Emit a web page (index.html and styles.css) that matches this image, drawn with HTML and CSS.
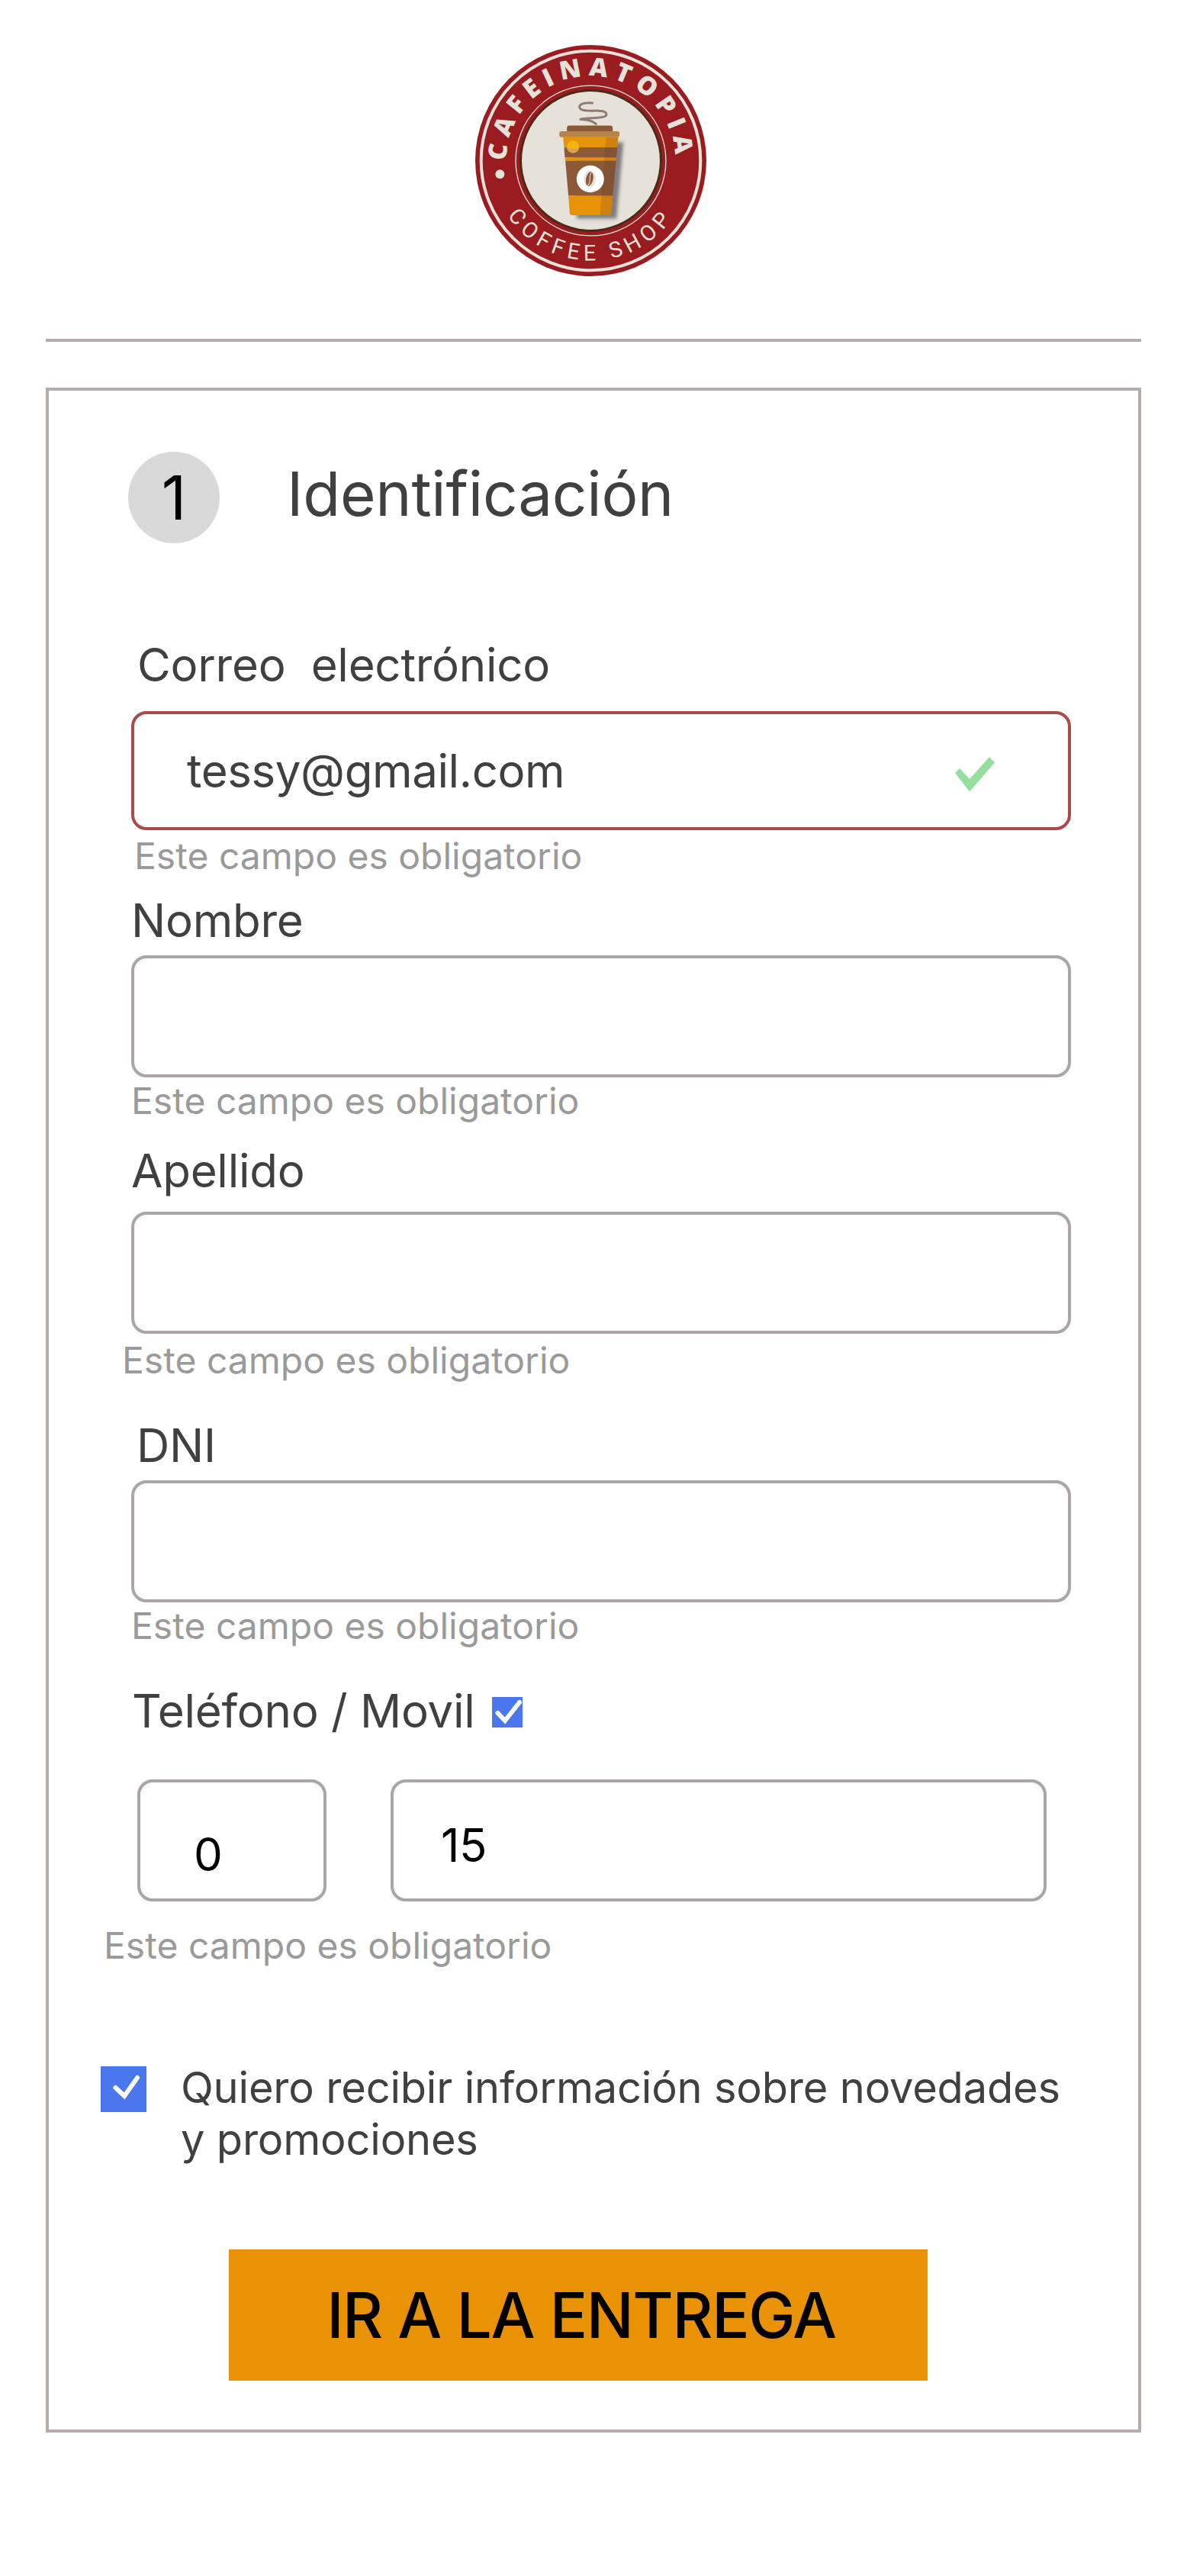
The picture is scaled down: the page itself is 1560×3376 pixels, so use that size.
FILE: index.html
```html
<!DOCTYPE html>
<html lang="es">
<head>
  <meta charset="UTF-8" />
  <title>Cafeinatopia - Identificación</title>
  <link rel="stylesheet" href="styles.css">
</head>
<body>
  <!-- LOGO -->
  <header class="site-header">
    <svg class="logo" viewBox="130 88 908 908" role="img" aria-label="Cafeinatopia Coffee Shop">
      <defs>
        <path id="arcTop" d="M 261.3 620 A 332 332 0 1 1 906.7 620" />
        <path id="arcBottom" d="M 204.4 640 A 392 392 0 0 0 963.6 640" />
        <filter id="cupShadow" x="-20%" y="-20%" width="150%" height="150%">
          <feGaussianBlur stdDeviation="7" />
        </filter>
      </defs>
      <circle cx="584" cy="542" r="454" fill="#9b1c20" />
      <circle cx="584" cy="542" r="431" fill="none" stroke="#e6e2da" stroke-width="12" />
      <circle cx="584" cy="542" r="295" fill="none" stroke="#e6e2da" stroke-width="4" />
      <circle cx="584" cy="542" r="280" fill="#4c2a16" />
      <circle cx="584" cy="542" r="271" fill="#e6e2da" />
      <circle cx="227" cy="595" r="18" fill="#e6e2da" />
      <text class="logo-top"><textPath href="#arcTop" startOffset="50%" text-anchor="middle">CAFEINATOPIA</textPath></text>
      <text class="logo-bottom"><textPath href="#arcBottom" startOffset="50%" text-anchor="middle">COFFEE SHOP</textPath></text>

      <!-- steam -->
      <path d="M590 316 C545 312 530 328 545 340 C565 355 640 335 645 358 C650 378 590 372 540 380 C560 380 590 385 604 398" fill="none" stroke="#8f7b6e" stroke-width="9" stroke-linecap="round" />

      <!-- cup -->
      <path d="M515 470 L712 470 L685 770 L530 770 Z" fill="#5f5a63" opacity="0.75" filter="url(#cupShadow)" />
      <path d="M490 414 Q490 404 500 404 L660 404 Q670 404 670 414 L670 428 L490 428 Z" fill="#8a5a36" />
      <path d="M475 450 L692 450 L688 490 L479 490 Z" fill="#e8920a" />
      <path d="M479 490 L688 490 L684 530 L482 530 Z" fill="#8c5a36" />
      <path d="M482 530 L684 530 L683 543 L484 543 Z" fill="#e8920a" />
      <path d="M484 543 L683 543 L670 680 L496 680 Z" fill="#8c5a36" />
      <path d="M496 680 L670 680 L664 748 Q663 756 655 756 L510 756 Q502 756 501 748 Z" fill="#e8920a" />
      <path d="M644 450 L692 450 L664 748 Q663 756 655 756 L620 756 Z" fill="#5c3a1e" opacity="0.18" />
      <rect x="460" y="427" width="237" height="23" rx="10" fill="#b9814b" />
      <circle cx="514" cy="488" r="24" fill="#f2b60f" />
      <path d="M491 495 A24 24 0 0 0 537 495 Z" fill="#d9a05a" />
      <ellipse cx="582" cy="614" rx="54" ry="53" fill="#ffffff" />
      <ellipse cx="580" cy="614" rx="24" ry="33" fill="#e6e2da" />
      <ellipse cx="579" cy="614" rx="14" ry="28" fill="#8c5a36" transform="rotate(12 579 614)" />
      <path d="M586 590 C572 605 590 620 572 640" fill="none" stroke="#e6e2da" stroke-width="3" />
    </svg>
  </header>

  <hr class="divider" />

  <main class="checkout-card">
    <div class="step-head">
      <span class="step-number">1</span>
      <h1 class="step-title">Identificación</h1>
    </div>

    <form class="step-form">
      <!-- EMAIL -->
      <div class="field field-email">
        <label class="field-label">Correo&nbsp; electrónico</label>
        <div class="input-wrap">
          <input class="text-input is-valid" type="email" value="tessy@gmail.com" />
          <svg class="valid-check" viewBox="0 0 52 46"><path d="M0 21 L6 15 L19 29 L45 0 L52 7.5 L19 45.5 Z" /></svg>
        </div>
        <p class="field-hint">Este campo es obligatorio</p>
      </div>

      <div class="field field-nombre">
        <label class="field-label">Nombre</label>
        <input class="text-input" type="text" />
        <p class="field-hint">Este campo es obligatorio</p>
      </div>

      <div class="field field-apellido">
        <label class="field-label">Apellido</label>
        <input class="text-input" type="text" />
        <p class="field-hint">Este campo es obligatorio</p>
      </div>

      <div class="field field-dni">
        <label class="field-label">DNI</label>
        <input class="text-input" type="text" />
        <p class="field-hint">Este campo es obligatorio</p>
      </div>

      <!-- PHONE -->
      <div class="field field-phone">
        <div class="phone-label">
          <label class="field-label">Teléfono / Movil</label>
          <span class="check-box check-small">
            <svg viewBox="0 0 40 40"><path d="M7.5 21 L17 31 L36 7" /></svg>
          </span>
        </div>
        <div class="phone-row">
          <input class="text-input phone-area" type="text" value="0" />
          <input class="text-input phone-number" type="text" value="15" />
        </div>
        <p class="field-hint">Este campo es obligatorio</p>
      </div>

      <div class="news-row">
        <span class="check-box check-large">
          <svg viewBox="0 0 60 60"><path d="M19.5 28 L31 39 L48 15" /></svg>
        </span>
        <p class="news-text">Quiero recibir información sobre novedades y promociones</p>
      </div>

      <button class="next-btn" type="button">IR A LA ENTREGA</button>
    </form>
  </main>
</body>
</html>
```

FILE: styles.css
```css
:root {
  --text-color: #404040;
  --hint-color: #9a9a9a;
  --border-gray: #aba5a5;
  --card-border: #b5adab;
  --error-red: #ab4a4a;
  --check-blue: #4a77ee;
  --orange: #e99205;
}
* {
  margin: 0;
  padding: 0;
  box-sizing: border-box;
}
body {
  background: #ffffff;
  color: var(--text-color);
  font-family: Inter, "Liberation Sans", sans-serif;
}

/* Header */
.site-header {
  display: flex;
  justify-content: center;
  padding: 59px 11px 0 0;
}
.logo {
  width: 303px;
  height: 303px;
}
.logo-top {
  font-family: "Open Sans", sans-serif;
  font-size: 100px;
  font-weight: 800;
  letter-spacing: 25px;
  fill: #e6e2da;
}
.logo-bottom {
  font-family: Roboto, sans-serif;
  font-size: 86px;
  font-weight: 400;
  letter-spacing: 20px;
  fill: #e6e2da;
}
.divider {
  border: none;
  height: 4px;
  background: var(--card-border);
  margin: 82px 64px 0 60px;
}

/* Card */
.checkout-card {
  margin: 60px 64px 0 60px;
  padding-bottom: 64px;
  border: 4px solid var(--card-border);
}
.step-head {
  display: flex;
  align-items: center;
  padding: 80px 0 0 104px;
}
.step-number {
  width: 120px;
  height: 120px;
  border-radius: 50%;
  background: #d9d9d9;
  color: #000000;
  font-size: 80px;
  font-weight: 400;
  line-height: 120px;
  text-align: center;
}
.step-title {
  margin: -10px 0 0 88px;
  font-size: 80px;
  font-weight: 400;
  letter-spacing: -0.25px;
  line-height: 96px;
}
.step-form {
  padding-left: 108px;
}

/* Fields */
.field-label {
  display: block;
  font-size: 60px;
  font-weight: 400;
  letter-spacing: -0.25px;
  line-height: 72px;
}
.text-input {
  display: block;
  width: 1232px;
  height: 160px;
  border: 4px solid var(--border-gray);
  border-radius: 20px;
  outline: none;
  background: #ffffff;
  color: var(--text-color);
  font-family: inherit;
  font-size: 60px;
  font-weight: 400;
  letter-spacing: -0.4px;
}
.text-input.is-valid {
  height: 156px;
  padding-left: 69px;
  border-color: var(--error-red);
}
.input-wrap {
  position: relative;
  margin-top: 25px;
}
.valid-check {
  position: absolute;
  left: 1080px;
  top: 60px;
  width: 52px;
  height: 46px;
  fill: #95de9f;
}
.field-hint {
  color: var(--hint-color);
  font-size: 48px;
  font-weight: 400;
  line-height: 58px;
}

/* each block sits a little differently in the design */
.field-email {
  margin-top: 123px;
}
.field-email .field-label {
  margin-left: 8px;
}
.field-email .field-hint {
  margin: 5px 0 0 4px;
}
.field-nombre {
  margin-top: 19px;
}
.field-nombre .text-input,
.field-dni .text-input {
  margin-top: 10px;
}
.field-nombre .field-hint,
.field-dni .field-hint {
  margin-top: 2px;
}
.field-apellido {
  margin-top: 26px;
}
.field-apellido .text-input {
  margin-top: 18px;
}
.field-apellido .field-hint {
  margin: 6px 0 0 -12px;
}
.field-dni {
  margin-top: 46px;
}
.field-dni .field-label {
  margin-left: 7px;
}

/* Phone */
.field-phone {
  margin-top: 46px;
}
.phone-label {
  display: flex;
  align-items: center;
  gap: 22px;
  margin-left: 1px;
}
.phone-row {
  display: flex;
  gap: 84px;
  margin: 54px 0 0 8px;
}
.phone-area {
  width: 248px;
  padding: 36px 0 0 70px;
  color: #000000;
}
.phone-number {
  width: 860px;
  padding: 12px 0 0 62px;
  color: #000000;
}
.field-phone .field-hint {
  margin: 29px 0 0 -36px;
}

/* Checkboxes */
.check-box {
  display: block;
  flex-shrink: 0;
  background: var(--check-blue);
}
.check-box svg {
  display: block;
  fill: none;
  stroke: #ffffff;
  stroke-width: 6;
  stroke-linecap: round;
}
.check-small {
  width: 40px;
  height: 40px;
  margin-top: 4px;
}
.check-large {
  width: 60px;
  height: 60px;
  margin-top: 6px;
}
.news-row {
  display: flex;
  gap: 45px;
  margin: 123px 0 0 -40px;
}
.news-text {
  width: 1170px;
  font-size: 56px;
  font-weight: 400;
  letter-spacing: -0.2px;
  line-height: 68px;
}

/* Button */
.next-btn {
  display: block;
  width: 916px;
  height: 172px;
  margin: 110px 0 0 128px;
  padding-left: 8px;
  border: none;
  background: var(--orange);
  color: #000000;
  font-family: inherit;
  font-size: 82px;
  font-weight: 500;
  letter-spacing: -1.4px;
  cursor: pointer;
}
```
